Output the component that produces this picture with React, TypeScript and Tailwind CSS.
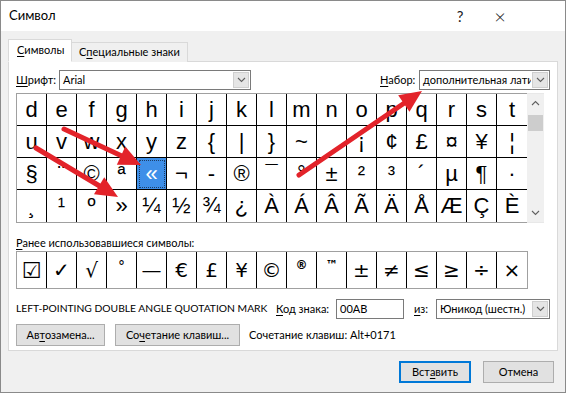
import React from "react";

const UI = { fontFamily: 'Lato, "Noto Sans", sans-serif' };
const ARIAL = { fontFamily: '"Liberation Sans", Arial, sans-serif' };
const SYM = { fontFamily: '"DejaVu Sans", "Liberation Sans", sans-serif' };

const ROWS: string[][] = [
  ["d", "e", "f", "g", "h", "i", "j", "k", "l", "m", "n", "o", "p", "q", "r", "s", "t"],
  ["u", "v", "w", "x", "y", "z", "{", "|", "}", "~", "", "¡", "¢", "£", "¤", "¥", "¦"],
  ["§", "¨", "©", "ª", "«", "¬", "-", "®", "¯", "°", "±", "²", "³", "´", "µ", "¶", "·"],
  ["¸", "¹", "º", "»", "¼", "½", "¾", "¿", "À", "Á", "Â", "Ã", "Ä", "Å", "Æ", "Ç", "È"],
];

const RECENT = ["☑", "✓", "√", "°", "—", "€", "£", "¥", "©", "®", "™", "±", "≠", "≤", "≥", "÷", "×"];

function Chevron({ up = false }: { up?: boolean }) {
  return (
    <svg width="9" height="6" viewBox="0 0 9 6">
      <path
        d={up ? "M1 5 L4.5 1.5 L8 5" : "M1 1 L4.5 4.5 L8 1"}
        fill="none"
        stroke="#606060"
        strokeWidth="1.1"
      />
    </svg>
  );
}

function Combo({ value, width }: { value: string; width: string }) {
  return (
    <div className={`${width} h-[20px] flex bg-white border border-[#7a7a7a]`}>
      <div className="flex-1 pl-[3px] leading-[18px] overflow-hidden whitespace-nowrap">{value}</div>
      <div className="w-[16px] m-px flex items-center justify-center bg-[#e5e5e5] border border-[#cfcfcf]">
        <Chevron />
      </div>
    </div>
  );
}

function Btn({ children, width, primary = false }: { children: React.ReactNode; width: string; primary?: boolean }) {
  return (
    <div
      className={`${width} h-[22px] flex items-center justify-center whitespace-nowrap bg-[#e1e1e1] ${
        primary ? "border-2 border-[#0078d7]" : "border border-[#adadad]"
      }`}
    >
      {children}
    </div>
  );
}

function Arrow({ x1, y1, x2, y2 }: { x1: number; y1: number; x2: number; y2: number }) {
  const dx = x2 - x1;
  const dy = y2 - y1;
  const len = Math.hypot(dx, dy);
  const ux = dx / len;
  const uy = dy / len;
  const hl = 22;
  const hw = 10;
  const bx = x2 - ux * hl;
  const by = y2 - uy * hl;
  const pts = `${x2},${y2} ${bx - uy * hw},${by + ux * hw} ${bx + uy * hw},${by - ux * hw}`;
  return (
    <g>
      <line x1={x1} y1={y1} x2={bx + ux * 2} y2={by + uy * 2} stroke="#e3232a" strokeWidth="5" strokeLinecap="round" />
      <polygon points={pts} fill="#e3232a" />
    </g>
  );
}

export default function App() {
  return (
    <div
      className="w-[566px] h-[393px] relative flex flex-col bg-[#f0f0f0] border border-[#8a8a8a] text-[11px] text-black overflow-hidden"
      style={UI}
    >
      {/* Title bar */}
      <div className="h-[30px] shrink-0 bg-white flex items-center pl-[8px]">
        <span className="text-[13px]">Символ</span>
        <span className="ml-auto w-[20px] text-center text-[15px] text-[#222]">?</span>
        <span className="ml-[20px] mr-[55px] w-[20px] text-center text-[20px] font-light text-[#222]">×</span>
      </div>

      <div className="flex-1 flex flex-col px-[7px] pt-[9px]">
        {/* Tabs */}
        <div className="h-[22px] flex items-end relative z-10 whitespace-nowrap">
          <div className="h-[23px] w-[64px] bg-white border border-[#d9d9d9] border-b-white pl-[8px] leading-[20px]">
            <span className="underline underline-offset-2">С</span>имволы
          </div>
          <div className="h-[20px] w-[116px] bg-[#f0f0f0] border border-l-0 border-b-0 border-[#d9d9d9] pl-[7px] leading-[18px]">
            С<span className="underline underline-offset-2">п</span>ециальные знаки
          </div>
        </div>

        {/* Panel */}
        <div className="w-[550px] h-[290px] -mt-px bg-white border border-[#d9d9d9] pl-[7px] pt-[8px] flex flex-col">
          <div className="flex items-center h-[20px] whitespace-nowrap">
            <span className="w-[43px]">
              <span className="underline underline-offset-2">Ш</span>рифт:
            </span>
            <Combo value="Arial" width="w-[192px]" />
            <span className="ml-[129px] w-[39px]">
              <span className="underline underline-offset-2">Н</span>абор:
            </span>
            <Combo value="дополнительная латиница-1" width="w-[131px]" />
          </div>

          {/* Symbol grid */}
          <div className="mt-[3px] flex">
            <div className="border-t border-l border-[#a0a0a0] border-b border-b-[#a0a0a0]" style={ARIAL}>
              {ROWS.map((row, r) => (
                <div key={r} className="flex">
                  {row.map((ch, c) => {
                    const sel = r === 2 && c === 4;
                    return (
                      <div
                        key={c}
                        className={`w-[30px] h-[32px] flex items-center justify-center text-[22px] leading-none ${
                          r < 3 ? "border-b border-black" : ""
                        } ${c < 16 ? "border-r border-black" : ""} ${sel ? "bg-[#3e8fe8] text-white" : ""}`}
                      >
                        {sel ? (
                          <div className="w-[26px] h-[28px] border border-dotted border-[#1c3d66] flex items-center justify-center">
                            {ch}
                          </div>
                        ) : (
                          ch
                        )}
                      </div>
                    );
                  })}
                </div>
              ))}
            </div>
            <div className="w-[17px] bg-[#f0f0f0] flex flex-col items-center border-t border-b border-[#e8e8e8]">
              <div className="h-[18px] flex items-center">
                <Chevron up />
              </div>
              <div className="mt-[3px] w-[15px] h-[16px] bg-[#cdcdcd]" />
              <div className="mt-auto h-[18px] flex items-center">
                <Chevron />
              </div>
            </div>
          </div>

          <div className="mt-[12px] h-[15px] leading-[15px]">
            <span className="underline underline-offset-2">Р</span>анее использовавшиеся символы:
          </div>

          {/* Recent symbols */}
          <div className="mt-[1px] w-[512px] flex border border-[#a0a0a0]" style={SYM}>
            {RECENT.map((ch, i) => (
              <div
                key={i}
                className={`w-[30px] h-[36px] flex items-center justify-center ${
                  i < 16 ? "border-r border-black" : ""
                } ${ch === "®" || ch === "™" ? "text-[12px] font-bold pb-[10px]" : ch === "°" ? "text-[14px] pb-[8px]" : "text-[20px]"} ${
                  ch === "☑" ? "font-bold text-[22px]" : ""
                }`}
              >
                {ch}
              </div>
            ))}
          </div>

          {/* Name row */}
          <div className="mt-[9px] h-[22px] flex items-center whitespace-nowrap">
            <span className="w-[260px] text-[10.3px]">LEFT-POINTING DOUBLE ANGLE QUOTATION MARK</span>
            <span className="w-[60px]">
              <span className="underline underline-offset-2">К</span>од знака:
            </span>
            <div className="w-[68px] h-[20px] border border-[#7a7a7a] bg-white pl-[3px] leading-[18px]">00AB</div>
            <span className="ml-[10px] w-[22px]">
              <span className="underline underline-offset-2">и</span>з:
            </span>
            <Combo value="Юникод (шестн.)" width="w-[114px]" />
          </div>

          {/* Button row */}
          <div className="mt-[4px] flex items-center whitespace-nowrap">
            <Btn width="w-[89px]">
              Ав<span className="underline underline-offset-2">т</span>озамена...
            </Btn>
            <div className="ml-[10px]">
              <Btn width="w-[125px]">
                Со<span className="underline underline-offset-2">ч</span>етание клавиш...
              </Btn>
            </div>
            <span className="ml-[9px]">Сочетание клавиш: Alt+0171</span>
          </div>
        </div>

        {/* Dialog buttons */}
        <div className="mt-[10px] flex justify-end pr-[4px]">
          <Btn width="w-[72px]" primary>
            Вст<span className="underline underline-offset-2">а</span>вить
          </Btn>
          <div className="ml-[12px]">
            <Btn width="w-[71px]">Отмена</Btn>
          </div>
        </div>
      </div>

      {/* Red annotation arrows */}
      <svg className="absolute left-0 top-0 pointer-events-none" width="566" height="393">
        <Arrow x1={63} y1={128} x2={140} y2={164} />
        <Arrow x1={35} y1={147} x2={117} y2={196} />
        <Arrow x1={298} y1={174} x2={421} y2={90} />
      </svg>
    </div>
  );
}
